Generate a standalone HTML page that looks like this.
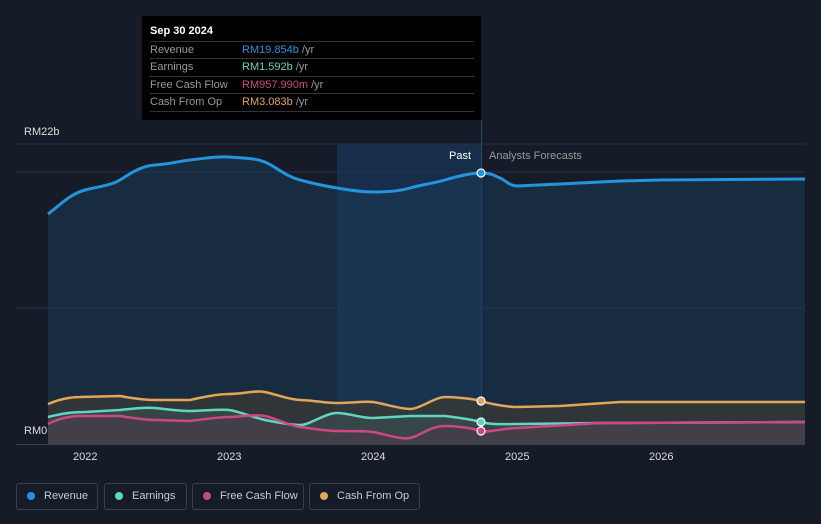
<!DOCTYPE html>
<html><head><style>
body{margin:0;width:821px;height:524px;background:#151b27;font-family:"Liberation Sans",sans-serif;overflow:hidden;position:relative}
.tip{position:absolute;left:142px;top:16px;width:339px;height:104px;background:#000;color:#fff;font-size:11px}
.tip .h{position:absolute;left:8px;top:9px;font-weight:bold}
.row{position:absolute;left:8px;width:324px;border-top:1px solid #333;height:17px;line-height:17px;color:#999}
.row span{position:absolute;left:92px}
.row i{font-style:normal;color:#aaa}
.leg{position:absolute;top:483px;height:27px;border:1px solid #3a404b;border-radius:3px;color:#ccc;font-size:11px;line-height:24px;box-sizing:border-box;padding-left:27px}
.leg b{position:absolute;left:10px;top:8px;width:8px;height:8px;border-radius:50%}
.lbl{position:absolute;color:#ddd;font-size:11px}
</style></head><body>
<svg width="821" height="524" style="position:absolute;left:0;top:0">
<rect x="337" y="144" width="144" height="300" fill="#173352" opacity="0.8"/>
<rect x="481" y="120" width="1" height="324" fill="#2a4a6a"/>
<g stroke="#2a3140" stroke-width="1"><line x1="16" y1="144" x2="805" y2="144"/><line x1="16" y1="172" x2="805" y2="172"/><line x1="16" y1="308" x2="805" y2="308"/></g>
<path d="M48,214 C60,205 70,194 85,190 S110,186 120,180 S140,166 155,165 S180,161 190,160 S215,156 229,157 S255,158 265,162 S285,176 300,180 S325,186 337,188 S360,192 373,192 S400,191 410,188 S435,183 445,180 S470,173 481,173 S495,176 500,178 S510,186 517,186 L560,184 L620,181 L661,180 L805,179 L805,444 L48,444Z" fill="#1b3a55" opacity="0.55"/>
<path d="M48,214 C60,205 70,194 85,190 S110,186 120,180 S140,166 155,165 S180,161 190,160 S215,156 229,157 S255,158 265,162 S285,176 300,180 S325,186 337,188 S360,192 373,192 S400,191 410,188 S435,183 445,180 S470,173 481,173 S495,176 500,178 S510,186 517,186 L560,184 L620,181 L661,180 L805,179" fill="none" stroke="#2394df" stroke-width="3"/>
<path d="M48,404 C60,399 70,397 80,397 L120,396 S140,400 155,400 L190,400 S215,394 229,394 S255,390 265,392 S290,400 300,400 S325,403 337,403 S365,401 373,402 S400,409 410,409 S435,397 445,397 S475,399 481,401 S505,407 517,407 L560,406 L620,402 L805,402 L805,444 L48,444Z" fill="#3b3a33" opacity="0.7"/>
<path d="M48,417 C60,414 70,412 85,412 L120,410 S145,407 155,408 S180,411 190,411 S220,409 229,410 S255,418 265,420 S290,425 300,425 S325,413 337,413 S360,418 373,418 L410,416 L445,416 S470,419 481,422 S505,424 517,424 L600,423 L805,422 L805,444 L48,444Z" fill="#3d5552" opacity="0.5"/>
<path d="M48,424 C60,418 70,416 80,416 L120,416 S145,420 155,420 L190,421 S220,417 229,417 S255,414 265,416 S290,426 300,427 S325,431 337,431 S365,431 373,432 S400,440 410,438 S430,426 445,426 S475,429 481,431 S505,428 517,428 L600,423 L805,422 L805,444 L48,444Z" fill="#4a3a4a" opacity="0.6"/>
<g fill="none" stroke-width="2.5">
<path d="M48,404 C60,399 70,397 80,397 L120,396 S140,400 155,400 L190,400 S215,394 229,394 S255,390 265,392 S290,400 300,400 S325,403 337,403 S365,401 373,402 S400,409 410,409 S435,397 445,397 S475,399 481,401 S505,407 517,407 L560,406 L620,402 L805,402" stroke="#e5a557"/>
<path d="M48,417 C60,414 70,412 85,412 L120,410 S145,407 155,408 S180,411 190,411 S220,409 229,410 S255,418 265,420 S290,425 300,425 S325,413 337,413 S360,418 373,418 L410,416 L445,416 S470,419 481,422 S505,424 517,424 L600,423 L805,422" stroke="#5fd6c2"/>
<path d="M48,424 C60,418 70,416 80,416 L120,416 S145,420 155,420 L190,421 S220,417 229,417 S255,414 265,416 S290,426 300,427 S325,431 337,431 S365,431 373,432 S400,440 410,438 S430,426 445,426 S475,429 481,431 S505,428 517,428 L600,423 L805,422" stroke="#cc4784"/>
</g>
<g stroke="#fff" stroke-width="1.2"><circle cx="481" cy="173" r="4" fill="#2394df"/><circle cx="481" cy="401" r="4" fill="#e5a557"/><circle cx="481" cy="422" r="4" fill="#5fd6c2"/><circle cx="481" cy="431" r="4" fill="#cc4784"/></g>
<line x1="16" y1="444.5" x2="805" y2="444.5" stroke="#3a404b"/>
</svg>
<div class="lbl" style="left:24px;top:126px">RM22b</div>
<div class="lbl" style="left:24px;top:425px">RM0</div>
<div class="lbl" style="left:449px;top:150px;color:#fff">Past</div>
<div class="lbl" style="left:489px;top:150px;color:#999">Analysts Forecasts</div>
<div class="lbl" style="left:73px;top:451px">2022</div>
<div class="lbl" style="left:217px;top:451px">2023</div>
<div class="lbl" style="left:361px;top:451px">2024</div>
<div class="lbl" style="left:505px;top:451px">2025</div>
<div class="lbl" style="left:649px;top:451px">2026</div>
<div class="tip"><div class="h">Sep 30 2024</div>
<div class="row" style="top:25px">Revenue<span><i style="color:#2394df">RM19.854b</i> /yr</span></div>
<div class="row" style="top:42px">Earnings<span><i style="color:#5fd6c2">RM1.592b</i> /yr</span></div>
<div class="row" style="top:60px">Free Cash Flow<span><i style="color:#cc4784">RM957.990m</i> /yr</span></div>
<div class="row" style="top:77px;border-bottom:1px solid #333">Cash From Op<span><i style="color:#e5a557">RM3.083b</i> /yr</span></div>
</div>
<div class="leg" style="left:16px;width:82px"><b style="background:#2394df"></b>Revenue</div>
<div class="leg" style="left:104px;width:83px"><b style="background:#5fd6c2"></b>Earnings</div>
<div class="leg" style="left:192px;width:112px"><b style="background:#cc4784"></b>Free Cash Flow</div>
<div class="leg" style="left:309px;width:111px"><b style="background:#e5a557"></b>Cash From Op</div>
</body></html>
